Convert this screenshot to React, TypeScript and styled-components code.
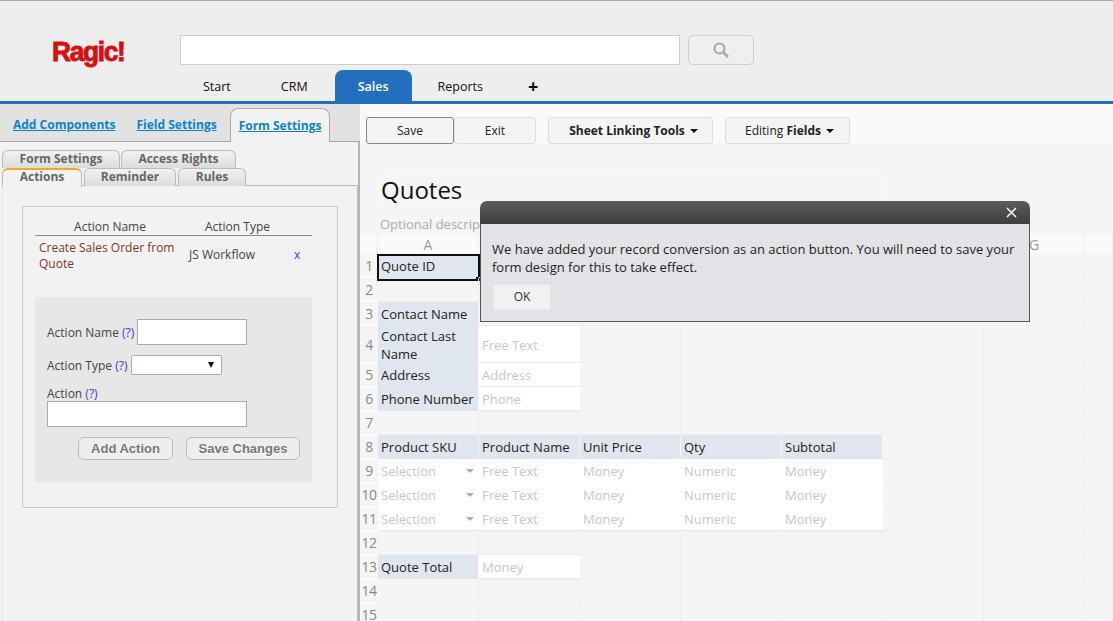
import styled, { createGlobalStyle } from "styled-components";

const GlobalStyle = createGlobalStyle`
    html, body {
        margin: 0;
        padding: 0;
        background-color: #f5f5f5;
    }
    * {
        box-sizing: border-box;
    }
`;

const Page = styled.div`
    position: relative;
    width: 1113px;
    height: 621px;
    overflow: hidden;
    font-family: "Open Sans", "Liberation Sans", sans-serif;
    font-size: 13px;
    color: #333;
`;

const Header = styled.header`
    height: 104px;
    background-color: #eee;
    border-top: 1px solid #aaa;
    border-bottom: 3px solid #236fbd;
    display: flex;
    flex-direction: column;
`;

const SearchRow = styled.div`
    display: flex;
    align-items: center;
    height: 30px;
    margin-top: 34px;
`;

const Logo = styled.div`
    width: 180px;
    margin-top: 4px;
    padding-left: 52px;
    font-family: "Liberation Sans", Arial, sans-serif;
    font-weight: bold;
    font-size: 28px;
    line-height: 30px;
    color: #d90f0f;
    -webkit-text-stroke: 0.9px #d90f0f;
    letter-spacing: -1.4px;
    transform-origin: 52px 50%;
    transform: scaleX(0.94);
`;

const SearchInput = styled.input`
    width: 500px;
    height: 30px;
    background-color: white;
    border: 1px solid #ccc;
    padding: 0 6px;
`;

const SearchButton = styled.button`
    width: 66px;
    height: 30px;
    margin-left: 8px;
    border: 1px solid #ccc;
    border-radius: 5px;
    background-color: #efefef;
    display: flex;
    align-items: center;
    justify-content: center;
    padding: 0;
`;

const NavTabs = styled.nav`
    display: flex;
    gap: 2px;
    height: 31px;
    margin-top: 5px;
    padding-left: 179px;
`;

const NavTab = styled.div<{ $active?: boolean }>`
    padding: ${(p) => (p.$active ? "2px 23px 0" : "2px 24px 0")};
    margin-left: ${(p) => (p.$active ? "1px" : "0")};
    display: flex;
    align-items: center;
    font-size: 12.5px;
    color: ${(p) => (p.$active ? "white" : "#111")};
    background-color: ${(p) => (p.$active ? "#236fbd" : "transparent")};
    border-radius: 8px 8px 0 0;
    font-weight: ${(p) => (p.$active ? 600 : 400)};
`;

const PlusTab = styled(NavTab)`
    font-size: 18px;
    font-weight: bold;
    padding: 0 19px;
    line-height: 1;
`;

const Main = styled.div`
    display: flex;
    height: 517px;
`;

const Sidebar = styled.aside`
    width: 360px;
    flex-shrink: 0;
    background-color: #f2f2f2;
    border-right: 2px solid #b4b4b4;
`;

const TopTabs = styled.div`
    height: 38px;
    margin-right: -2px;
    background-color: #e2e2e2;
    border-bottom: 1px solid #aaa;
    display: flex;
    align-items: flex-end;
    padding-left: 13px;
`;

const TopLink = styled.a<{ $active?: boolean }>`
    font-size: 12px;
    font-weight: bold;
    color: #0a83d0;
    text-decoration: underline;
    white-space: nowrap;
    height: ${(p) => (p.$active ? "34px" : "29px")};
    line-height: ${(p) => (p.$active ? "34px" : "25px")};
    margin-right: ${(p) => (p.$active ? "0" : "21px")};
    margin-bottom: ${(p) => (p.$active ? "-1px" : "0")};
    padding: ${(p) => (p.$active ? "0 8px" : "0")};
    margin-left: ${(p) => (p.$active ? "-8px" : "0")};
    background-color: ${(p) => (p.$active ? "#f2f2f2" : "transparent")};
    border: ${(p) => (p.$active ? "1px solid #aaa" : "none")};
    border-bottom: none;
    border-radius: 8px 8px 0 0;
`;

const SubTabRow = styled.div<{ $first?: boolean }>`
    display: flex;
    gap: ${(p) => (p.$first ? "1px" : "2px")};
    height: 18px;
    padding-left: 2px;
    margin-top: ${(p) => (p.$first ? "8px" : "0")};
`;

const SubTab = styled.div<{ $width: number; $active?: boolean }>`
    width: ${(p) => p.$width}px;
    height: ${(p) => (p.$active ? "19px" : "18px")};
    position: relative;
    z-index: ${(p) => (p.$active ? 2 : 1)};
    text-align: center;
    font-size: 12px;
    font-weight: bold;
    line-height: ${(p) => (p.$active ? "14px" : "15px")};
    color: #666;
    border: 1px solid #bbb;
    border-bottom: none;
    border-top: ${(p) => (p.$active ? "2px solid #f5a623" : "1px solid #bbb")};
    border-radius: 6px 6px 0 0;
    background: ${(p) => (p.$active ? "#f2f2f2" : "linear-gradient(#f2f2f2, #dcdcdc)")};
`;

const TabPanel = styled.div`
    margin-left: 2px;
    margin-top: -1px;
    height: 440px;
    width: 356px;
    border: 1px solid #bbb;
    border-left-color: #e8e8e8;
    border-bottom: none;
    padding: 20px 20px 0 19px;
`;

const ActionsBox = styled.div`
    width: 316px;
    height: 302px;
    border: 1px solid #ccc;
    padding: 13px 25px 0 12px;
`;

const ActionHeader = styled.div`
    display: grid;
    grid-template-columns: 150px 1fr;
    height: 16px;
    line-height: 13px;
    font-size: 12px;
    color: #444;
    border-bottom: 1px solid #888;
    text-align: center;
`;

const ActionHeaderCell = styled.span<{ $shift: number }>`
    position: relative;
    left: ${(p) => p.$shift}px;
    white-space: nowrap;
`;

const ActionRow = styled.div`
    display: grid;
    grid-template-columns: 150px 105px 1fr;
    align-items: center;
    font-size: 12px;
    line-height: 16px;
    height: 38px;
    padding-top: 2px;
`;

const ActionName = styled.span`
    color: #7a3a1e;
    padding-left: 4px;
`;

const ActionType = styled.span`
    color: #444;
    padding-left: 4px;
    margin-top: -2px;
`;

const ActionRemove = styled.span`
    color: #3a3ae0;
    padding-left: 4px;
    margin-top: -2px;
`;

const ActionForm = styled.div`
    margin-top: 23px;
    height: 185px;
    background-color: #e7e7e7;
    padding: 22px 12px 0;
    font-size: 12px;
    color: #444;
`;

const FieldRow = styled.div`
    display: flex;
    align-items: center;
    gap: 3px;
    margin-bottom: 10px;
`;

const Help = styled.span`
    color: #3a3ae0;
`;

const TextField = styled.input<{ $width: number }>`
    width: ${(p) => p.$width}px;
    height: 26px;
    background-color: white;
    border: 1px solid #aaa;
    padding: 0 4px;
    display: block;
`;

const FakeSelect = styled.div`
    position: relative;
    width: 91px;
    height: 20px;
    margin-left: 1px;
    background-color: white;
    border: 1px solid #aaa;
    border-radius: 2px;

    &::after {
        content: "";
        position: absolute;
        right: 7px;
        top: 6px;
        border-left: 3.5px solid transparent;
        border-right: 3.5px solid transparent;
        border-top: 6px solid #111;
    }
`;

const ActionLabel = styled.div`
    line-height: 14px;
    padding-top: 2px;
`;

const FormButtons = styled.div`
    display: flex;
    gap: 13px;
    margin-top: 10px;
    padding-left: 31px;
`;

const GrayButton = styled.button<{ $width: number }>`
    width: ${(p) => p.$width}px;
    height: 23px;
    padding: 0;
    border: 1px solid #bbb;
    border-radius: 6px;
    background-color: #eee;
    font-family: "Liberation Sans", Arial, sans-serif;
    font-size: 13px;
    font-weight: bold;
    color: #777;
    text-shadow: 0 1px 0 white;
`;

const Content = styled.section`
    flex: 1;
    min-width: 0;
    background-color: #f5f5f5;
`;

const Toolbar = styled.div`
    height: 42px;
    background-color: #fafafa;
    border-bottom: 1px solid #eee;
    display: flex;
    align-items: flex-start;
    padding: 13px 0 0 6px;
`;

const ToolButton = styled.div<{ $width: number; $focus?: boolean; $gap?: number; $nudge?: number }>`
    width: ${(p) => p.$width}px;
    height: 27px;
    margin-left: ${(p) => p.$gap || 0}px;
    padding-left: ${(p) => p.$nudge || 0}px;
    display: flex;
    align-items: center;
    justify-content: center;
    gap: 4px;
    font-size: 12px;
    color: #222;
    background-color: #f4f4f4;
    border: 1px solid ${(p) => (p.$focus ? "#888" : "#ddd")};
    border-radius: 3px;
`;

const Caret = styled.span`
    display: inline-block;
    border-left: 4px solid transparent;
    border-right: 4px solid transparent;
    border-top: 4px solid #111;
    margin-left: 1px;
`;

const FormTitle = styled.div`
    height: 89px;
    padding: 27px 0 0 19px;
`;

const TitleBox = styled.div`
    width: 502px;
    height: 33px;
    border: 1px solid #f9f9f9;
    padding-left: 1px;
    font-size: 24px;
    line-height: 31px;
    color: #111;
`;

const Description = styled.div`
    margin-top: 9px;
    padding-left: 1px;
    font-size: 13px;
    line-height: 18px;
    color: #aaa;
`;

const Sheet = styled.div`
    display: grid;
    grid-template-columns: 18px repeat(7, 101px) 1fr;
    grid-auto-rows: 24px;
`;

const ColumnHead = styled.div`
    height: 19px;
    background-color: #fafafa;
    border-right: 1px solid #eee;
    text-align: center;
    font-size: 14px;
    line-height: 20px;
    color: #999;
`;

const RowNumber = styled.div`
    border-bottom: 1px solid #fff;
    text-align: center;
    font-size: 14px;
    color: #888;
    display: flex;
    align-items: center;
    justify-content: center;
    letter-spacing: -0.5px;
`;

const inputLine = (bare?: boolean) => (bare ? "white" : "#e8e8e8");

const Cell = styled.div<{ $kind: CellKind; $arrow?: boolean; $bare?: boolean; $tall?: boolean }>`
    position: relative;
    display: flex;
    align-items: center;
    padding: ${(p) => (p.$tall ? "2px 0 0 3px" : "0 0 0 3px")};
    font-size: 13px;
    line-height: 18px;
    background-color: ${(p) =>
        p.$kind === "label" ? "#e0e6ee" : p.$kind === "empty" ? "transparent" : "white"};
    color: ${(p) => (p.$kind === "input" ? "#c8c8c8" : "#222")};
    border-right: 1px solid ${(p) => (p.$kind === "empty" ? "#eee" : p.$kind === "label" ? "#f5f5f5" : "white")};
    border-bottom: 1px solid ${(p) =>
        p.$kind === "empty" ? "#eee" : p.$kind === "label" ? "#e0e6ee" : inputLine(p.$bare)};

    ${(p) =>
        p.$arrow &&
        `&::after {
            content: "";
            position: absolute;
            right: 4px;
            top: 10px;
            border-left: 4px solid transparent;
            border-right: 4px solid transparent;
            border-top: 4px solid #aaa;
        }`}
`;

const CellText = styled.span`
    position: relative;
    z-index: 1;
`;

const ActiveFrame = styled.div`
    position: absolute;
    left: -1px;
    top: 0;
    right: -2px;
    bottom: -4px;
    border: 2px solid #111;
    background-color: #e0e6ee;

    &::after {
        content: "";
        position: absolute;
        right: -2px;
        bottom: -2px;
        width: 4px;
        height: 4px;
        background-color: #111;
    }
`;

const Dialog = styled.div`
    position: absolute;
    left: 480px;
    top: 201px;
    width: 550px;
    height: 121px;
    z-index: 5;
    display: flex;
    flex-direction: column;
`;

const DialogBar = styled.div`
    height: 23px;
    flex-shrink: 0;
    background: linear-gradient(#5c5c5c, #3e3e3e);
    border-radius: 7px 7px 0 0;
    display: flex;
    align-items: center;
    justify-content: flex-end;
    padding-right: 13px;
`;

const DialogBody = styled.div`
    flex: 1;
    border: 1px solid #555;
    border-top: none;
    background-color: #e3e3e7;
    background-image:
        repeating-linear-gradient(0deg, rgba(255, 255, 255, 0.1) 0 1px, transparent 1px 4px),
        repeating-linear-gradient(90deg, rgba(120, 120, 130, 0.035) 0 1px, transparent 1px 5px);
    padding: 16px 11px 0;
    font-size: 13px;
    line-height: 18px;
    color: #222;
`;

const OkButton = styled.div`
    width: 58px;
    height: 26px;
    margin: 8px 0 0 1px;
    background-color: #f1f1f1;
    border: 1px solid #e8e8e8;
    border-radius: 3px;
    text-align: center;
    font-size: 12px;
    line-height: 24px;
    color: #333;
`;

type CellKind = "label" | "input" | "empty";

type CellData = { kind: CellKind; text?: string; arrow?: boolean; active?: boolean; bare?: boolean };

const label = (text: string, active?: boolean): CellData => ({ kind: "label", text, active });
const field = (text: string, arrow?: boolean, bare?: boolean): CellData => ({ kind: "input", text, arrow, bare });

const selectionRow = (bare: boolean) => [
    field("Selection", true, bare),
    field("Free Text", false, bare),
    field("Money", false, bare),
    field("Numeric", false, bare),
    field("Money", false, bare),
];

type SheetRow = { cells: CellData[]; height?: number };

const sheetRows: SheetRow[] = [
    { cells: [label("Quote ID", true)] },
    { cells: [] },
    { cells: [label("Contact Name")] },
    { cells: [label("Contact Last Name"), field("Free Text")], height: 37 },
    { cells: [label("Address"), field("Address")] },
    { cells: [label("Phone Number"), field("Phone")] },
    { cells: [] },
    { cells: [label("Product SKU"), label("Product Name"), label("Unit Price"), label("Qty"), label("Subtotal")] },
    { cells: selectionRow(true) },
    { cells: selectionRow(true) },
    { cells: selectionRow(false) },
    { cells: [] },
    { cells: [label("Quote Total"), field("Money")] },
    { cells: [] },
    { cells: [] },
];

const columns = ["", "A", "", "", "", "", "", "G", ""];

function renderRow(row: SheetRow, i: number) {
    const blanks = Array.from({ length: 8 - row.cells.length });
    return [
        <RowNumber key={`n${i}`}>{i + 1}</RowNumber>,
        ...row.cells.map((c, j) => (
            <Cell key={`${i}-${j}`} $kind={c.kind} $arrow={c.arrow} $bare={c.bare} $tall={!!row.height}>
                {c.active && <ActiveFrame />}
                <CellText>{c.text}</CellText>
            </Cell>
        )),
        ...blanks.map((_, j) => <Cell key={`${i}-b${j}`} $kind="empty" />),
    ];
}

export default function App() {
    return (
        <Page>
            <GlobalStyle />
            <Header>
                <SearchRow>
                    <Logo>Ragic!</Logo>
                    <SearchInput />
                    <SearchButton>
                        <svg width="18" height="18" viewBox="0 0 18 18" fill="none" stroke="#aaa">
                            <circle cx="7.5" cy="7.5" r="5" strokeWidth="2.2" />
                            <path d="M11.5 11.5 L16 16" strokeWidth="3" />
                        </svg>
                    </SearchButton>
                </SearchRow>
                <NavTabs>
                    <NavTab>Start</NavTab>
                    <NavTab>CRM</NavTab>
                    <NavTab $active>Sales</NavTab>
                    <NavTab>Reports</NavTab>
                    <PlusTab>+</PlusTab>
                </NavTabs>
            </Header>
            <Main>
                <Sidebar>
                    <TopTabs>
                        <TopLink>Add Components</TopLink>
                        <TopLink>Field Settings</TopLink>
                        <TopLink $active>Form Settings</TopLink>
                    </TopTabs>
                    <SubTabRow $first>
                        <SubTab $width={118}>Form Settings</SubTab>
                        <SubTab $width={115}>Access Rights</SubTab>
                    </SubTabRow>
                    <SubTabRow>
                        <SubTab $width={80} $active>Actions</SubTab>
                        <SubTab $width={92}>Reminder</SubTab>
                        <SubTab $width={68}>Rules</SubTab>
                    </SubTabRow>
                    <TabPanel>
                        <ActionsBox>
                            <ActionHeader>
                                <ActionHeaderCell $shift={0}>Action Name</ActionHeaderCell>
                                <ActionHeaderCell $shift={-11}>Action Type</ActionHeaderCell>
                            </ActionHeader>
                            <ActionRow>
                                <ActionName>Create Sales Order from Quote</ActionName>
                                <ActionType>JS Workflow</ActionType>
                                <ActionRemove>x</ActionRemove>
                            </ActionRow>
                            <ActionForm>
                                <FieldRow>
                                    <span>Action Name <Help>(?)</Help></span>
                                    <TextField $width={110} />
                                </FieldRow>
                                <FieldRow>
                                    <span>Action Type <Help>(?)</Help></span>
                                    <FakeSelect />
                                </FieldRow>
                                <ActionLabel>Action <Help>(?)</Help></ActionLabel>
                                <TextField $width={200} />
                                <FormButtons>
                                    <GrayButton $width={95}>Add Action</GrayButton>
                                    <GrayButton $width={114}>Save Changes</GrayButton>
                                </FormButtons>
                            </ActionForm>
                        </ActionsBox>
                    </TabPanel>
                </Sidebar>
                <Content>
                    <Toolbar>
                        <ToolButton $width={88} $focus>Save</ToolButton>
                        <ToolButton $width={82}>Exit</ToolButton>
                        <ToolButton $width={165} $gap={12} $nudge={6}>
                            <b>Sheet Linking Tools</b>
                            <Caret />
                        </ToolButton>
                        <ToolButton $width={125} $gap={12} $nudge={4}>
                            <span>Editing <b>Fields</b></span>
                            <Caret />
                        </ToolButton>
                    </Toolbar>
                    <FormTitle>
                        <TitleBox>Quotes</TitleBox>
                        <Description>Optional description of your form</Description>
                    </FormTitle>
                    <Sheet style={{ gridTemplateRows: `19px ${sheetRows.map((r) => `${r.height || 24}px`).join(" ")}` }}>
                        {columns.map((c, i) => (
                            <ColumnHead key={i}>{c}</ColumnHead>
                        ))}
                        {sheetRows.map(renderRow)}
                    </Sheet>
                </Content>
            </Main>
            <Dialog>
                <DialogBar>
                    <svg width="11" height="11" viewBox="0 0 11 11" stroke="white" strokeWidth="1.5">
                        <path d="M1 1 L10 10 M10 1 L1 10" />
                    </svg>
                </DialogBar>
                <DialogBody>
                    We have added your record conversion as an action button. You will need to save your form design for this to take effect.
                    <OkButton>OK</OkButton>
                </DialogBody>
            </Dialog>
        </Page>
    );
}
